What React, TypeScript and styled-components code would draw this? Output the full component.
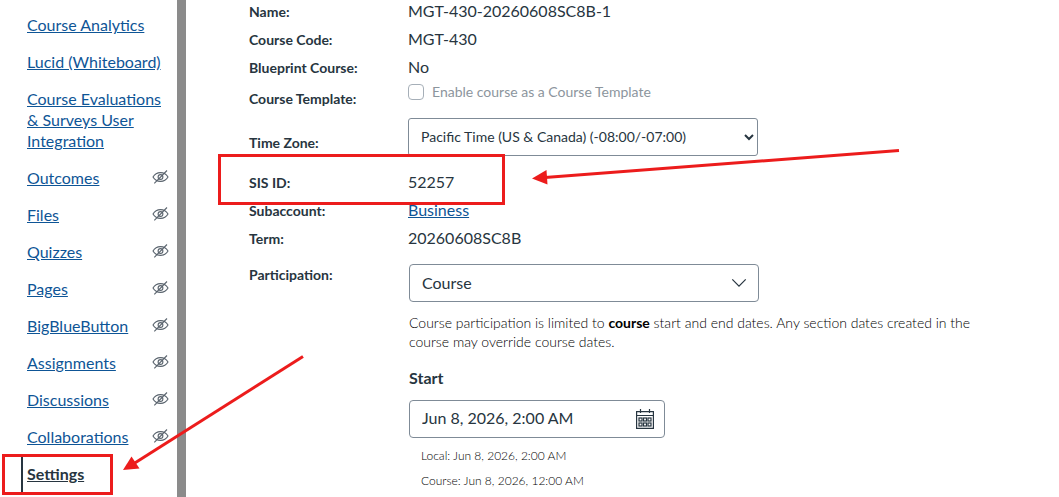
import React from 'react';
import styled, { createGlobalStyle, css } from 'styled-components';

const INK = '#273540';
const LINK = '#0e5596';
const RED = '#ec1c1c';
const BORDER = '#7f8b97';

const GlobalStyle = createGlobalStyle`
  * { box-sizing: border-box; }
  body {
    margin: 0;
    background: #fff;
    color: ${INK};
    font: 400 16px/20px Lato, "Liberation Sans", sans-serif;
  }
`;

const Page = styled.div`
  position: relative;
  display: flex;
  min-height: 100vh;
  overflow: hidden;
`;

const Sidebar = styled.nav`
  flex: none;
  width: 186px;
  padding: 6px 0 0 21px;
  border-right: 9px solid #8b8b8b;
`;

const NavList = styled.ul`
  list-style: none;
  margin: 0;
  padding: 0;
`;

const NavItem = styled.li`
  display: flex;
  justify-content: space-between;
  align-items: flex-start;
  padding-right: 8px;
`;

const NavLink = styled.a<{ $active?: boolean }>`
  flex: 0 1 142px;
  padding: 8px 0 8px 4px;
  border-left: 2px solid transparent;
  color: ${LINK};
  line-height: 21px;
  text-decoration: underline;
  ${(p) =>
    p.$active &&
    css`
      border-left-color: ${INK};
      color: ${INK};
      font-weight: 700;
    `}
`;

const HiddenMark = styled.svg`
  flex: none;
  margin-top: 10px;
`;

const Main = styled.main`
  flex: 1;
  min-width: 0;
  padding: 0 63px 0 63px;
`;

const Form = styled.form`
  margin-top: -2px;
`;

const Row = styled.div<{ $height?: number; $top?: boolean }>`
  display: grid;
  grid-template-columns: 159px minmax(0, 1fr);
  align-items: ${(p) => (p.$top ? 'start' : 'center')};
  min-height: ${(p) => p.$height ?? 28}px;
`;

const labelStyle = css`
  font-size: 14px;
  font-weight: 700;
`;

const Term = styled.span`
  ${labelStyle}
`;

const Value = styled.span`
  padding-bottom: 2px;
`;

const FieldLabel = styled.label`
  ${labelStyle}
`;

const TopLabel = styled(FieldLabel)`
  padding-top: 12px;
`;

const TextLink = styled.a`
  color: ${LINK};
`;

const CheckLabel = styled.label`
  display: flex;
  align-items: center;
  align-self: start;
  gap: 8px;
  height: 20px;
  color: #8c959d;
  font-size: 14px;
`;

const Checkbox = styled.input`
  appearance: none;
  width: 16px;
  height: 16px;
  margin: 0;
  border: 1px solid #a6afb8;
  border-radius: 4px;
  background: #fff;
`;

const fieldStyle = css`
  height: 38px;
  border: 1px solid ${BORDER};
  background: #fff;
  color: ${INK};
  font-family: inherit;
`;

const ZoneSelect = styled.select`
  ${fieldStyle}
  align-self: start;
  width: 100%;
  max-width: 350px;
  margin-top: 2px;
  padding: 0 0 2px 8px;
  border-radius: 3px;
  font-size: 14px;
`;

const Participation = styled.div`
  padding: 11px 0 0 1px;
`;

const SelectWrap = styled.div`
  display: grid;
  align-items: center;
  max-width: 350px;
  > * { grid-area: 1 / 1; }
  > svg { justify-self: end; margin-right: 12px; pointer-events: none; }
`;

const PlainSelect = styled.select`
  ${fieldStyle}
  appearance: none;
  width: 100%;
  padding: 0 12px 2px;
  border-radius: 4px;
  font-size: 16px;
`;

const Hint = styled.p`
  max-width: 570px;
  margin: 11px 0 0;
  color: #000;
  font-size: 14px;
  font-weight: 300;
  line-height: 19px;
  b { font-weight: 700; }
`;

const StartLabel = styled.label`
  display: block;
  margin: 17px 0 12px;
  font-weight: 700;
`;

const DateField = styled.div`
  ${fieldStyle}
  display: flex;
  align-items: center;
  max-width: 256px;
  padding: 0 9px 0 12px;
  border-radius: 4px;
`;

const DateInput = styled.input`
  flex: 1;
  min-width: 0;
  padding: 0 0 2px;
  border: 0;
  outline: 0;
  background: none;
  color: inherit;
  font: inherit;
`;

const IconButton = styled.button`
  display: flex;
  padding: 0;
  border: 0;
  background: none;
  color: ${INK};
`;

const Times = styled.div`
  display: grid;
  gap: 5px;
  padding: 8px 0 0 12px;
  color: #000;
  font-size: 12px;
  font-weight: 300;
`;

const Callout = styled.div<{ $x: number; $y: number; $w: number; $h: number }>`
  position: absolute;
  left: ${(p) => p.$x}px;
  top: ${(p) => p.$y}px;
  width: ${(p) => p.$w}px;
  height: ${(p) => p.$h}px;
  border: 3px solid ${RED};
  pointer-events: none;
`;

const Arrow = styled.svg<{ $x: number; $y: number }>`
  position: absolute;
  left: ${(p) => p.$x}px;
  top: ${(p) => p.$y}px;
  pointer-events: none;
`;

const EyeOff = () => (
  <HiddenMark width="17" height="16" viewBox="0 0 17 16" fill="none" stroke="#59636d" strokeWidth="1.1" role="img" aria-label="Hidden">
    <path d="M1 8C2.6 5.2 5.2 3.6 8.5 3.6S14.4 5.2 16 8C14.4 10.8 11.8 12.4 8.5 12.4S2.6 10.8 1 8Z" />
    <circle cx="8.5" cy="8" r="2.4" />
    <path d="M2.3 14.3 15 1.5" />
  </HiddenMark>
);

const Chevron = () => (
  <svg width="16" height="16" viewBox="0 0 16 16" fill="none" stroke={INK} strokeWidth="1.2" aria-hidden="true">
    <path d="M1.3 4.3 8 11.2 14.7 4.3" />
  </svg>
);

const Calendar = () => (
  <svg width="20" height="22" viewBox="0 0 20 22" fill="none" stroke="currentColor" strokeWidth="1.2" aria-hidden="true">
    <path d="M1.6 3.6H18.4V20.4H1.6ZM1.6 7.5H18.4M5.5 1V5M14.5 1V5" />
    {[10, 15].map((y) =>
      [4, 8.5, 13].map((x) => <rect key={`${x}-${y}`} x={x} y={y} width="3" height="3" />),
    )}
  </svg>
);

const links: { label: string; hidden?: boolean; active?: boolean }[] = [
  { label: 'Course Analytics' },
  { label: 'Lucid (Whiteboard)' },
  { label: 'Course Evaluations & Surveys User Integration' },
  { label: 'Outcomes', hidden: true },
  { label: 'Files', hidden: true },
  { label: 'Quizzes', hidden: true },
  { label: 'Pages', hidden: true },
  { label: 'BigBlueButton', hidden: true },
  { label: 'Assignments', hidden: true },
  { label: 'Discussions', hidden: true },
  { label: 'Collaborations', hidden: true },
  { label: 'Settings', active: true },
];

export default function App() {
  return (
    <Page>
      <GlobalStyle />
      <Sidebar>
        <NavList>
          {links.map((l) => (
            <NavItem key={l.label}>
              <NavLink href="#" $active={l.active}>{l.label}</NavLink>
              {l.hidden && <EyeOff />}
            </NavItem>
          ))}
        </NavList>
      </Sidebar>
      <Main>
        <Form>
          <Row><Term>Name:</Term><Value>MGT-430-20260608SC8B-1</Value></Row>
          <Row><Term>Course Code:</Term><Value>MGT-430</Value></Row>
          <Row><Term>Blueprint Course:</Term><Value>No</Value></Row>
          <Row $height={34}>
            <Term>Course Template:</Term>
            <CheckLabel><Checkbox type="checkbox" disabled />Enable course as a Course Template</CheckLabel>
          </Row>
          <Row $height={53}>
            <FieldLabel htmlFor="zone">Time Zone:</FieldLabel>
            <ZoneSelect id="zone"><option>Pacific Time (US &amp; Canada) (-08:00/-07:00)</option></ZoneSelect>
          </Row>
          <Row><Term>SIS ID:</Term><Value>52257</Value></Row>
          <Row><Term>Subaccount:</Term><Value><TextLink href="#">Business</TextLink></Value></Row>
          <Row><Term>Term:</Term><Value>20260608SC8B</Value></Row>
          <Row $top>
            <TopLabel htmlFor="participation">Participation:</TopLabel>
            <Participation>
              <SelectWrap>
                <PlainSelect id="participation"><option>Course</option></PlainSelect>
                <Chevron />
              </SelectWrap>
              <Hint>
                Course participation is limited to <b>course</b> start and end dates. Any section dates created in the course may override course dates.
              </Hint>
              <StartLabel htmlFor="start">Start</StartLabel>
              <DateField>
                <DateInput id="start" defaultValue="Jun 8, 2026, 2:00 AM" />
                <IconButton type="button" aria-label="Choose a date"><Calendar /></IconButton>
              </DateField>
              <Times>
                <span>Local: Jun 8, 2026, 2:00 AM</span>
                <span>Course: Jun 8, 2026, 12:00 AM</span>
              </Times>
            </Participation>
          </Row>
        </Form>
      </Main>
      <Callout $x={218} $y={154} $w={287} $h={51} />
      <Callout $x={2} $y={454} $w={111} $h={41} />
      <Arrow $x={530} $y={146} width="372" height="42" viewBox="530 146 372 42" aria-hidden="true">
        <path d="M899 150.5 545 177.500" stroke={RED} strokeWidth="3" />
        <path d="M532 178.5 546.5 170 547.5 184.5Z" fill={RED} />
      </Arrow>
      <Arrow $x={120} $y={353} width="186" height="120" viewBox="120 353 186 120" aria-hidden="true">
        <path d="M303 356.5 134 463.5" stroke={RED} strokeWidth="3" />
        <path d="M123 470 131.5 456.5 139.5 468.5Z" fill={RED} />
      </Arrow>
    </Page>
  );
}
